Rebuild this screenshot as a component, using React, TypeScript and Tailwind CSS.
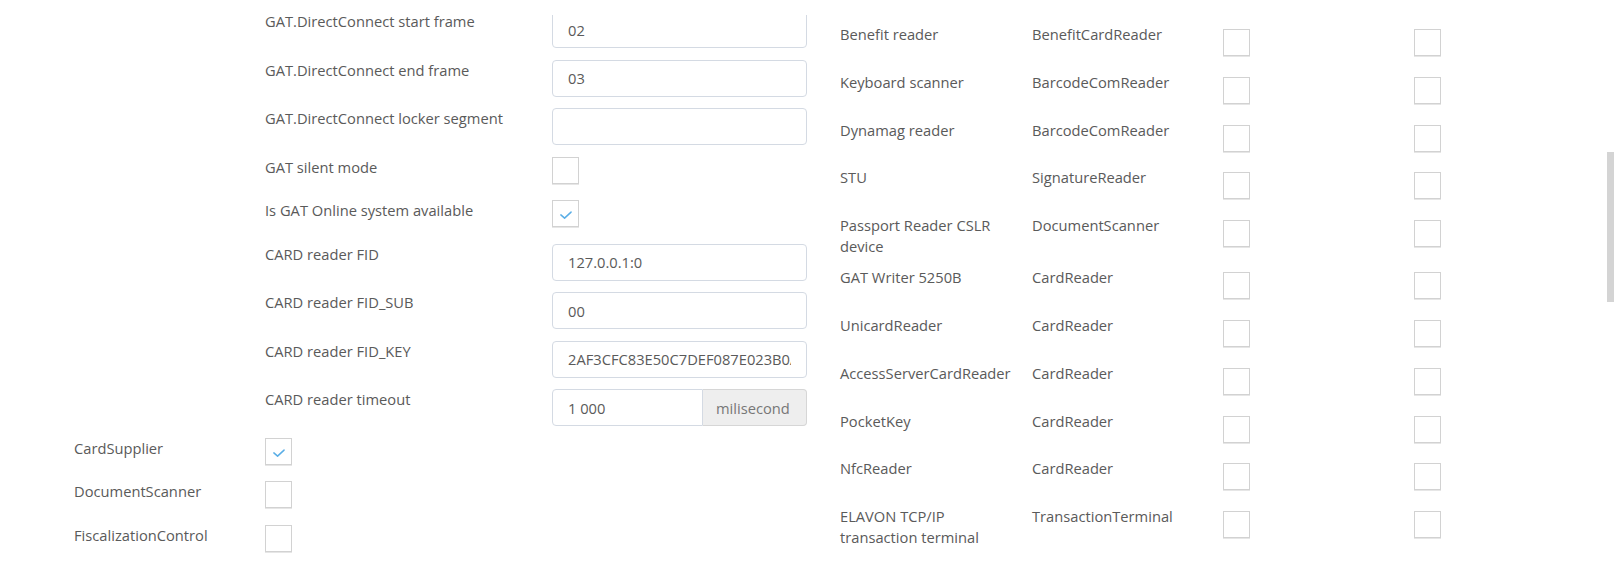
import type { ReactNode } from 'react';

type Field =
  | { kind: 'input'; label: string; value: string; addon?: string }
  | { kind: 'check'; label: string; checked?: boolean };

const nestedFields: Field[] = [
  { kind: 'input', label: 'GAT.DirectConnect start frame', value: '02' },
  { kind: 'input', label: 'GAT.DirectConnect end frame', value: '03' },
  { kind: 'input', label: 'GAT.DirectConnect locker segment', value: '' },
  { kind: 'check', label: 'GAT silent mode' },
  { kind: 'check', label: 'Is GAT Online system available', checked: true },
  { kind: 'input', label: 'CARD reader FID', value: '127.0.0.1:0' },
  { kind: 'input', label: 'CARD reader FID_SUB', value: '00' },
  { kind: 'input', label: 'CARD reader FID_KEY', value: '2AF3CFC83E50C7DEF087E023B0A1F6D2' },
  { kind: 'input', label: 'CARD reader timeout', value: '1 000', addon: 'milisecond' },
];

const outerFields = [
  { label: 'CardSupplier', checked: true },
  { label: 'DocumentScanner', checked: false },
  { label: 'FiscalizationControl', checked: false },
];

const devices = [
  ['Benefit reader', 'BenefitCardReader'],
  ['Keyboard scanner', 'BarcodeComReader'],
  ['Dynamag reader', 'BarcodeComReader'],
  ['STU', 'SignatureReader'],
  ['Passport Reader CSLR device', 'DocumentScanner'],
  ['GAT Writer 5250B', 'CardReader'],
  ['UnicardReader', 'CardReader'],
  ['AccessServerCardReader', 'CardReader'],
  ['PocketKey', 'CardReader'],
  ['NfcReader', 'CardReader'],
  ['ELAVON TCP/IP transaction terminal', 'TransactionTerminal'],
];

function Checkbox({ checked }: { checked?: boolean }) {
  return (
    <div className="w-[27px] h-[27px] border border-[#d2d2d2] bg-white shadow-[0_1px_0_#e6e6e6] flex items-center justify-center shrink-0">
      {checked && (
        <svg width="27" height="27" viewBox="0 0 27 27" className="block">
          <polyline points="8.5,15 12.5,18.5 19.5,12" fill="none" stroke="#5aaee6" strokeWidth="1.6" strokeLinecap="round" strokeLinejoin="round" />
        </svg>
      )}
    </div>
  );
}

function TextInput({ value, addon }: { value: string; addon?: string }) {
  if (addon) {
    return (
      <div className="flex w-[255px] h-[37px]">
        <input
          readOnly
          value={value}
          className="w-[151px] h-full px-[15px] border border-[#d4dae3] rounded-l-[4px] bg-white text-[#5a5a5a] outline-none"
        />
        <span className="flex-1 h-full flex items-center pl-[13px] border border-l-0 border-[#d6d6d6] rounded-r-[4px] bg-[#eeeeee] text-[#777]">
          {addon}
        </span>
      </div>
    );
  }
  return (
    <input
      readOnly
      value={value}
      className="w-[255px] h-[37px] px-[15px] border border-[#d4dae3] rounded-[4px] bg-white text-[#5a5a5a] outline-none"
    />
  );
}

function Row({ label, labelWidth, children, mb }: { label: string; labelWidth: string; children: ReactNode; mb: string }) {
  return (
    <div className={`flex items-start ${mb}`}>
      <div className={`${labelWidth} shrink-0`}>{label}</div>
      {children}
    </div>
  );
}

export default function App() {
  return (
    <div
      className="relative w-[1617px] h-[562px] overflow-hidden bg-white text-[14.7px] leading-[20px] text-[#5a5a5a]"
      style={{ fontFamily: '"Open Sans", "Liberation Sans", sans-serif' }}
    >
      <div className="flex h-full">
        {/* left form */}
        <div className="w-[820px] shrink-0 pt-[11px] pl-[74px]">
          <div className="ml-[191px]">
            {nestedFields.map((f, i) =>
              f.kind === 'input' ? (
                <Row key={f.label} label={f.label} labelWidth="w-[287px]" mb="mb-[11.5px]">
                  {i === 0 ? (
                    // top edge of the first field sits under the scrolled-away area
                    <div className="mt-[4px] h-[33px] overflow-hidden">
                      <div className="-mt-[4px]">
                        <TextInput value={f.value} addon={f.addon} />
                      </div>
                    </div>
                  ) : (
                    <TextInput value={f.value} addon={f.addon} />
                  )}
                </Row>
              ) : (
                <Row key={f.label} label={f.label} labelWidth="w-[287px]" mb="mb-[16.5px]">
                  <Checkbox checked={f.checked} />
                </Row>
              )
            )}
          </div>
          {outerFields.map((f) => (
            <Row key={f.label} label={f.label} labelWidth="w-[191px]" mb="mb-[16.5px]">
              <Checkbox checked={f.checked} />
            </Row>
          ))}
        </div>

        {/* device table */}
        <div className="pl-[20px] pt-[24px]">
          {devices.map(([name, type]) => (
            <div key={name} className="grid grid-cols-[192px_191px_191px_60px] items-start">
              <div className="pr-[14px] pb-[11px] leading-[20.5px]">{name}</div>
              <div className="pr-[10px] pb-[11px] leading-[20.5px]">{type}</div>
              <div className="pt-[5px] pb-[15.8px]">
                <Checkbox />
              </div>
              <div className="pt-[5px] pb-[15.8px]">
                <Checkbox />
              </div>
            </div>
          ))}
        </div>
      </div>

      {/* scrollbar thumb */}
      <div className="absolute left-[1607px] top-[152px] w-[7px] h-[150px] bg-[#d4d4d4]" />
    </div>
  );
}
